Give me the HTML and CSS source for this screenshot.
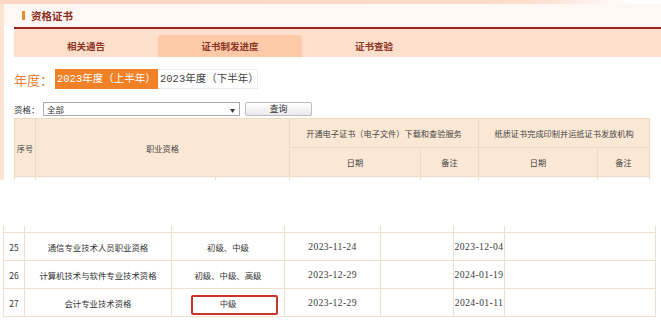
FILE: index.html
```html
<!DOCTYPE html>
<html lang="zh-CN">
<head>
    <meta charset="UTF-8">
    <meta name="viewport" content="width=device-width, initial-scale=1.0">
    <title>资格证书</title>
    <link rel="stylesheet" href="styles.css">
</head>
<body>
    <div class="band"></div>
    <div class="top">
        <div class="title-bar">
            <span class="title-mark"></span>
            <span class="title">资格证书</span>
        </div>
        <div class="content">
            <div class="tabs">
                <div class="tab">相关通告</div>
                <div class="tab active">证书制发进度</div>
                <div class="tab">证书查验</div>
            </div>

            <div class="year-row">
                <span class="year-label">年度：</span>
                <span class="year-btn on">2023年度（上半年）</span>
                <span class="year-btn off">2023年度（下半年）</span>
            </div>

            <div class="filter-row">
                <span class="filter-label">资格：</span>
                <div class="select">
                    <span>全部</span>
                    <span class="arrow">&#9660;</span>
                </div>
                <div class="query-btn">查询</div>
            </div>

            <table class="grid">
                <colgroup>
                    <col style="width:21px">
                    <col style="width:180px">
                    <col style="width:74px">
                    <col style="width:131px">
                    <col style="width:58px">
                    <col style="width:119px">
                    <col style="width:52px">
                </colgroup>
                <thead>
                    <tr>
                        <th rowspan="2">序号</th>
                        <th rowspan="2" colspan="2">职业资格</th>
                        <th colspan="2">开通电子证书（电子文件）下载和查验服务</th>
                        <th colspan="2">纸质证书完成印制并运抵证书发放机构</th>
                    </tr>
                    <tr>
                        <th>日期</th>
                        <th>备注</th>
                        <th>日期</th>
                        <th>备注</th>
                    </tr>
                </thead>
                <tbody>
                    <tr>
                        <td></td><td></td><td></td><td></td><td></td><td></td><td></td>
                    </tr>
                </tbody>
            </table>
        </div>
    </div>

    <div class="bottom">
        <table class="list">
            <colgroup>
                <col style="width:21px">
                <col style="width:147px">
                <col style="width:113px">
                <col style="width:96px">
                <col style="width:73px">
                <col style="width:51px">
                <col style="width:151px">
            </colgroup>
            <tbody>
                <tr class="cut">
                    <td></td><td></td><td></td><td></td><td></td><td></td><td></td>
                </tr>
                <tr>
                    <td>25</td>
                    <td>通信专业技术人员职业资格</td>
                    <td>初级、中级</td>
                    <td class="date">2023-11-24</td>
                    <td></td>
                    <td class="date">2023-12-04</td>
                    <td></td>
                </tr>
                <tr>
                    <td>26</td>
                    <td>计算机技术与软件专业技术资格</td>
                    <td>初级、中级、高级</td>
                    <td class="date">2023-12-29</td>
                    <td></td>
                    <td class="date">2024-01-19</td>
                    <td></td>
                </tr>
                <tr>
                    <td>27</td>
                    <td>会计专业技术资格</td>
                    <td class="mark-cell">中级<span class="mark"></span></td>
                    <td class="date">2023-12-29</td>
                    <td></td>
                    <td class="date">2024-01-11</td>
                    <td></td>
                </tr>
            </tbody>
        </table>
        <p class="note">注：以上为证书制发进度</p>
    </div>
</body>
</html>
```

FILE: styles.css
```css
body {
    margin: 0;
    font-family: "Noto Sans CJK SC", "Noto Sans", sans-serif;
    color: #333;
    background-color: #fff;
}
.band {
    height: 4px;
    background: linear-gradient(to right, #fcd5c4 0%, #fcdccd 80%, #fff 96%);
}
.top {
    height: 176px;
    overflow: hidden;
    border-left: 4px solid #fde3d2;
}
.title-bar {
    height: 23px;
    background-color: #fdf8f4;
    display: flex;
    align-items: center;
    padding-left: 18px;
}
.title-mark {
    width: 3px;
    height: 9px;
    background-color: #ec8a2f;
    margin-right: 6px;
}
.title {
    font-size: 10.5px;
    font-weight: bold;
    color: #8c2b1c;
}
.content {
    margin-left: 10px;
}
.tabs {
    height: 30px;
    box-sizing: border-box;
    border-top: 2px solid #9d1f1f;
    background-color: #fedfcb;
    padding-top: 6px;
    display: flex;
}
.tab {
    width: 144px;
    height: 22px;
    line-height: 22px;
    text-align: center;
    font-size: 9.5px;
    font-weight: bold;
    color: #8b3324;
}
.tab.active {
    background-color: #fccaa7;
    border-radius: 4px 4px 0 0;
}
.year-row {
    display: flex;
    align-items: center;
    height: 20px;
    margin-top: 12px;
}
.year-label {
    width: 41px;
    font-size: 13px;
    color: #e97f31;
}
.year-btn {
    height: 20px;
    line-height: 20px;
    box-sizing: border-box;
    padding: 0 2px;
    font-family: "Liberation Mono", "Noto Sans CJK SC", monospace;
    font-size: 10.5px;
    white-space: nowrap;
}
.year-btn.on {
    width: 103px;
    background-color: #f08127;
    color: #fff;
}
.year-btn.off {
    width: 100px;
    line-height: 18px;
    border: 1px solid #ececec;
    border-left: none;
    color: #444;
}
.filter-row {
    display: flex;
    align-items: center;
    height: 14px;
    margin-top: 13px;
    font-size: 8.5px;
}
.filter-label {
    width: 29px;
}
.select {
    width: 197px;
    height: 14px;
    box-sizing: border-box;
    border: 1px solid #a9a9a9;
    display: flex;
    align-items: center;
    justify-content: space-between;
    padding: 0 4px 0 3px;
}
.arrow {
    font-size: 5px;
}
.query-btn {
    width: 67px;
    height: 14px;
    margin-left: 5px;
    box-sizing: border-box;
    border: 1px solid #bdbdbd;
    border-radius: 2px;
    background: linear-gradient(#fff, #e9e9e9);
    font-size: 9px;
    line-height: 12px;
    text-align: center;
}
.grid {
    width: 636px;
    margin-top: 2px;
    border-collapse: collapse;
    table-layout: fixed;
    font-size: 8.2px;
}
.grid th, .grid td {
    border: 1px solid #efd9c3;
    padding: 0;
    text-align: center;
    font-weight: normal;
}
.grid th {
    height: 28px;
    background-color: #fbe8d4;
    color: #444;
}
.grid td {
    height: 28px;
}
.bottom {
    height: 95px;
    margin-top: 46px;
    padding-left: 3px;
    overflow: hidden;
}
.list {
    width: 653px;
    border-collapse: collapse;
    table-layout: fixed;
    font-size: 8.4px;
}
.list td {
    height: 27px;
    border: 1px solid #eee0cf;
    padding: 0;
    text-align: center;
    white-space: nowrap;
}
.list .cut td {
    height: 6px;
    border-top: none;
}
.list .date {
    font-family: "Liberation Serif", serif;
    font-size: 9.6px;
    letter-spacing: 0.4px;
    color: #3a3a3a;
}
.mark-cell {
    position: relative;
}
.mark {
    position: absolute;
    left: 19px;
    top: 6px;
    width: 87px;
    height: 20px;
    box-sizing: border-box;
    border: 2px solid #c8332d;
    border-radius: 2px;
}
.note {
    margin: 2px 0 0 2px;
    font-size: 9px;
    color: #d63a2a;
}
```
